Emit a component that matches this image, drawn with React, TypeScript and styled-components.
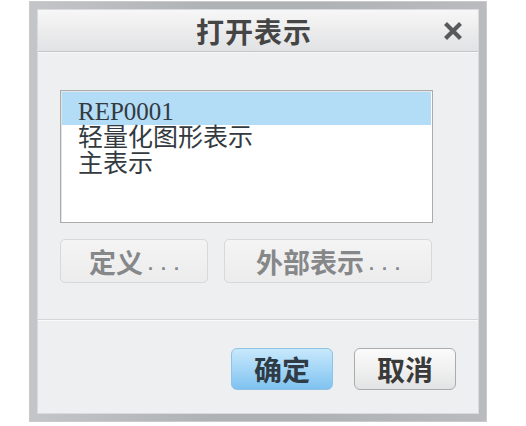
import styled, { createGlobalStyle } from "styled-components";

const GlobalStyle = createGlobalStyle`
  html, body {
    margin: 0;
    padding: 0;
    background: #ffffff;
  }
  body {
    font-family: "Liberation Serif", "Noto Sans CJK SC", serif;
  }
`;

const items = ["REP0001", "轻量化图形表示", "主表示"];

export default function App() {
  const selected = 0;

  return (
    <>
      <GlobalStyle />
      <Frame>
        <Window>
          <TitleBar>
            <Title>打开表示</Title>
            <CloseButton aria-label="关闭">
              <svg width="18" height="18" viewBox="0 0 18 18">
                <path d="M3 3 L15 15 M15 3 L3 15" stroke="#58595b" strokeWidth="4.2" strokeLinecap="square" />
              </svg>
            </CloseButton>
          </TitleBar>
          <Body>
            <ListBox>
              {items.map((item, i) => (
                <ListItem key={item} $active={i === selected}>
                  {item}
                </ListItem>
              ))}
            </ListBox>
            <ActionRow>
              <GhostButton $width={148} disabled>
                定义<Dots>...</Dots>
              </GhostButton>
              <GhostButton $width={208} disabled>
                外部表示<Dots>...</Dots>
              </GhostButton>
            </ActionRow>
          </Body>
          <Separator />
          <Footer>
            <DialogButton $primary>确定</DialogButton>
            <DialogButton>取消</DialogButton>
          </Footer>
        </Window>
      </Frame>
    </>
  );
}

const Frame = styled.div`
  margin: 1px 0 0 29px;
  width: 458px;
  box-sizing: border-box;
  padding: 7px;
  background: linear-gradient(90deg, #c3c5c8 0%, #afb2b5 40%, #afb2b5 60%, #b9bbbe 100%);
  border: 1px solid #c8cacc;
`;

const Window = styled.div`
  display: flex;
  flex-direction: column;
  background: #eeeff1;
  border: 1px solid #d8dadc;
  box-sizing: border-box;
`;

const TitleBar = styled.div`
  position: relative;
  display: flex;
  align-items: center;
  justify-content: center;
  height: 41px;
  background: linear-gradient(180deg, #f7f7f7 0%, #ebebec 55%, #e1e2e4 100%);
  border-bottom: 1px solid #c3c5c8;
`;

const Title = styled.div`
  font-family: "Noto Sans CJK SC", sans-serif;
  font-weight: 700;
  font-size: 28px;
  color: #454545;
  margin-right: 8px;
  letter-spacing: 1px;
`;

const CloseButton = styled.div`
  position: absolute;
  right: 16px;
  top: 12px;
  width: 18px;
  height: 18px;
  display: flex;
`;

const Body = styled.div`
  display: flex;
  flex-direction: column;
  padding: 37px 45px 36px 22px;
  border-top: 1px solid #f8f8f9;
`;

const ListBox = styled.div`
  height: 133px;
  box-sizing: border-box;
  background: #ffffff;
  border: 1px solid #a9abad;
  box-shadow: inset 1px 1px 0 #e4e4e4;
  padding: 1px 1px 0 1px;
`;

const ListItem = styled.div<{ $active?: boolean }>`
  height: ${(p) => (p.$active ? 33 : 26)}px;
  box-sizing: border-box;
  padding-top: ${(p) => (p.$active ? 7 : 0)}px;
  line-height: 26px;
  padding-left: 16px;
  font-size: 25px;
  color: #333a40;
  background: ${(p) => (p.$active ? "#b3dcf7" : "transparent")};
  white-space: nowrap;
`;

const ActionRow = styled.div`
  display: flex;
  gap: 16px;
  margin-top: 16px;
`;

const GhostButton = styled.button<{ $width: number }>`
  width: ${(p) => p.$width}px;
  height: 44px;
  box-sizing: border-box;
  border: 1px solid #d6d8da;
  border-radius: 5px;
  background: linear-gradient(180deg, #f4f4f5 0%, #ececed 100%);
  font-family: "Noto Sans CJK SC", sans-serif;
  font-weight: 700;
  font-size: 27px;
  color: #868789;
  padding: 0;
  display: flex;
  align-items: center;
  justify-content: center;
`;

const Dots = styled.span`
  font-family: "Liberation Sans", sans-serif;
  font-weight: 700;
  font-size: 18px;
  letter-spacing: 8px;
  margin-left: 5px;
  margin-right: -8px;
  margin-top: 6px;
`;

const Separator = styled.div`
  height: 1px;
  background: #d3d5d7;
  border-bottom: 1px solid #fbfbfc;
`;

const Footer = styled.div`
  display: flex;
  justify-content: flex-end;
  gap: 21px;
  padding: 27px 22px 23px 0;
`;

const DialogButton = styled.button<{ $primary?: boolean }>`
  width: 102px;
  height: 42px;
  box-sizing: border-box;
  border-radius: 6px;
  border: 1px solid ${(p) => (p.$primary ? "#8fc3e6" : "#a9acaf")};
  background: ${(p) =>
    p.$primary
      ? "linear-gradient(180deg, #c8e8fc 0%, #a4d6f7 50%, #7fc2f0 100%)"
      : "linear-gradient(180deg, #fbfbfb 0%, #f0f0f0 50%, #e2e3e4 100%)"};
  font-family: "Noto Sans CJK SC", sans-serif;
  font-weight: 700;
  font-size: 28px;
  color: ${(p) => (p.$primary ? "#2f3b45" : "#3a3a3a")};
  padding: 0;
  display: flex;
  align-items: center;
  justify-content: center;
`;
